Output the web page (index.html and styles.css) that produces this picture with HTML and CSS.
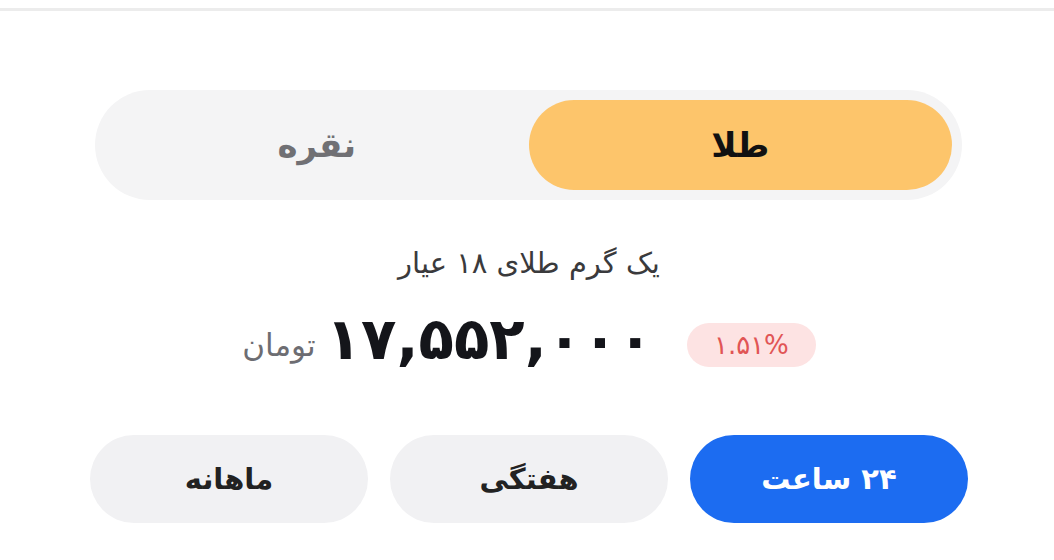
FILE: index.html
```html
<!DOCTYPE html>
<html lang="fa" dir="rtl">
<head>
	<meta charset="utf-8">
	<title>قیمت طلا</title>
	<link rel="stylesheet" href="styles.css">
</head>
<body>
	<div class="topbar"></div>

	<div class="main">
		<div class="tabs">
			<div class="tab active">طلا</div>
			<div class="tab">نقره</div>
		</div>

		<div class="subtitle">یک گرم طلای ۱۸ عیار</div>

		<div class="price-row">
			<span class="badge">۱.۵۱%</span>
			<span class="price">۱۷,۵۵۲,۰۰۰</span>
			<span class="unit">تومان</span>
		</div>

		<div class="ranges">
			<div class="range active">۲۴ ساعت</div>
			<div class="range">هفتگی</div>
			<div class="range">ماهانه</div>
		</div>
	</div>
</body>
</html>
```

FILE: styles.css
```css
* {
	margin: 0;
	padding: 0;
	box-sizing: border-box;
}
body {
	font-family: 'DejaVu Sans', sans-serif;
	background-color: #fff;
	color: #222;
}
.topbar {
	height: 11px;
	border-bottom: 3px solid #ececec;
}
.main {
	padding: 0 86px 0 90px;
}
.tabs {
	display: flex;
	margin: 79px 6px 0 5px;
	padding: 10px;
	background-color: #f4f4f5;
	border-radius: 55px;
}
.tab {
	flex: 1;
	height: 90px;
	display: flex;
	justify-content: center;
	align-items: center;
	border-radius: 45px;
	font-size: 34px;
	font-weight: bold;
	color: #707074;
}
.tab.active {
	background-color: #fdc56b;
	color: #111;
}
.subtitle {
	margin-top: 46px;
	text-align: center;
	font-size: 29px;
	color: #3a3a3c;
}
.price-row {
	display: flex;
	justify-content: center;
	align-items: center;
	margin-top: 25px;
}
.badge {
	display: flex;
	align-items: center;
	height: 44px;
	padding: 0 27px;
	margin-top: 12px;
	background-color: #fde3e3;
	color: #e15555;
	font-size: 26px;
	border-radius: 22px;
	margin-left: 34px;
}
.price {
	font-size: 58px;
	font-weight: bold;
	color: #14151a;
}
.unit {
	font-size: 31px;
	color: #6d6d72;
	margin-right: 10px;
	padding-top: 12px;
}
.ranges {
	display: flex;
	gap: 22px;
	margin-top: 62px;
}
.range {
	flex: 1;
	height: 88px;
	display: flex;
	justify-content: center;
	align-items: center;
	border-radius: 44px;
	background-color: #f1f1f3;
	font-size: 29px;
	font-weight: bold;
	color: #222;
}
.range.active {
	background-color: #1c6cf1;
	color: #fff;
}
```
